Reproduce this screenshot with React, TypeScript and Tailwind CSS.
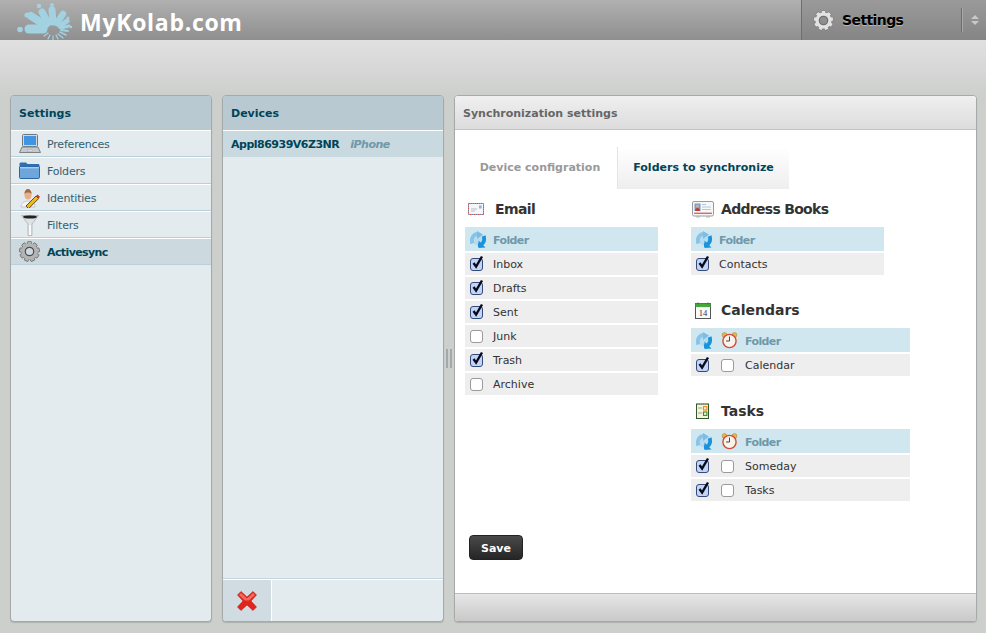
import React from 'react';

const Gear = ({ size = 20, fill = '#e2e2e2', stroke = '#6f6f6f' }: { size?: number; fill?: string; stroke?: string }) => (
  <svg width={size} height={size} viewBox="0 0 24 24" className="shrink-0">
    {[0, 40, 80, 120, 160, 200, 240, 280, 320].map((a) => (
      <rect key={a} x="9.600" y="0.600" width="4.800" height="6" rx="1" fill={fill} stroke={stroke} strokeWidth="0.700" transform={`rotate(${a} 12 12)`} />
    ))}
    <circle cx="12" cy="12" r="7" fill="none" stroke={fill} strokeWidth="4.400" />
    <circle cx="12" cy="12" r="4.800" fill="none" stroke={stroke} strokeWidth="1.400" />
  </svg>
);

// petals as round-capped strokes, in screen coordinates of the top-left corner
const Logo = () => {
  const petals = [
    [29, 29, 43, 29, 9], [31, 16, 45, 25, 8], [42, 12, 48, 23, 7], [52, 10, 53, 22, 7],
    [63, 14, 57, 23, 6.500], [67, 21, 60, 26, 5], [69, 26, 61, 28, 3], [68, 31, 61, 30, 1.800],
    [66, 35, 60, 32, 1.400], [63, 38, 58, 34, 1.200], [58, 39, 56, 35, 1.200], [53, 40, 53, 36, 1.200],
    [48, 39, 50, 35, 1.200], [44, 36, 48, 33, 1.200],
  ];
  const dots = [
    [20, 29.500, 2.800], [27, 15, 2.600], [39, 6, 2.200], [52, 5, 2], [68, 18, 1.500], [71, 27, 1.200],
  ];
  return (
    <svg width="65" height="40" viewBox="15 0 65 40" className="shrink-0">
      {petals.map(([x1, y1, x2, y2, w], i) => (
        <line key={i} x1={x1} y1={y1} x2={x2} y2={y2} stroke="#a2d2e2" strokeWidth={w} strokeLinecap="round" />
      ))}
      {dots.map(([cx, cy, r], i) => (
        <circle key={i} cx={cx} cy={cy} r={r} fill="#a2d2e2" />
      ))}
    </svg>
  );
};

const Laptop = () => (
  <svg width="22" height="20" viewBox="0 0 22 20">
    <rect x="3.500" y="0.500" width="15" height="12" rx="1" fill="#d4d8da" stroke="#70777b" />
    <rect x="5" y="2" width="12" height="9" fill="#3f94e4" />
    <path d="M3 13h16l2.500 5.500H0.500z" fill="#c6c9cb" stroke="#7d8285" />
    <rect x="8.500" y="16" width="5" height="1.600" fill="#eef0f1" stroke="#9a9fa2" strokeWidth="0.500" />
  </svg>
);

const FolderIcon = () => (
  <svg width="21" height="17" viewBox="0 0 21 17">
    <path d="M0.500 2c0-1 .5-1.500 1.500-1.500h5L8.500 2H19c1 0 1.500.5 1.500 1.500V5H.5z" fill="#2f6fb0" />
    <path d="M.5 5h20v10.500c0 .6-.4 1-1 1h-18c-.6 0-1-.4-1-1z" fill="#6ea6dc" stroke="#2c67a4" />
    <rect x="1" y="5" width="19" height="1.400" fill="#a9cdf0" />
  </svg>
);

const IdentityIcon = () => (
  <svg width="20" height="20" viewBox="0 0 20 20">
    <path d="M1 19c0-4 3-6 7-6s7 2 7 6z" fill="#f2f3f4" stroke="#b4b9bc" strokeWidth="0.700" />
    <ellipse cx="8" cy="7" rx="3.600" ry="4.600" fill="#e6b08c" />
    <path d="M4.400 6c0-3 1.600-5 3.600-5s3.600 2 3.600 5C10 4 6 4 4.400 6z" fill="#a9683c" />
    <path d="M6 18l10-10 2.600 2.600-10 10z" fill="#efb81e" stroke="#3a2c0e" strokeWidth="0.800" />
    <path d="M16 8l1.600-1.600 2.400 2.400-1.400 1.800z" fill="#d7342c" />
  </svg>
);

const FunnelIcon = () => (
  <svg width="18" height="22" viewBox="0 0 18 22">
    <path d="M.5 1.500h17L11 10v11.500H7V10z" fill="#dfe2e3" stroke="#9aa0a3" strokeWidth="0.600" />
    <ellipse cx="9" cy="3" rx="7" ry="1.600" fill="#222" />
    <path d="M8 11h2v10H8z" fill="#fafafa" />
  </svg>
);

const SyncIcon = () => (
  <svg width="16" height="17" viewBox="0 0 16 17" className="shrink-0">
    <circle cx="8" cy="8.500" r="6" fill="#b7dcf0" />
    <path d="M2.400 12.500C.6 7.500 3.500 3 8 2.800" fill="none" stroke="#86c4ea" strokeWidth="3.800" />
    <path d="M7 0l6 3.500-6 4.500z" fill="#7cbde8" />
    <path d="M13.600 5c1.800 5-1 9-5.600 9.200" fill="none" stroke="#1b93dc" strokeWidth="3.800" />
    <path d="M8.500 9.500V17l7-.5z" fill="#1b93dc" />
  </svg>
);

const ClockIcon = () => (
  <svg width="17" height="17" viewBox="0 0 17 17" className="shrink-0">
    <circle cx="3.500" cy="3" r="2.400" fill="#e9b84a" stroke="#a9762a" strokeWidth="0.500" />
    <circle cx="13.500" cy="3" r="2.400" fill="#e9b84a" stroke="#a9762a" strokeWidth="0.500" />
    <circle cx="8.500" cy="9" r="6.600" fill="#f8f4ea" stroke="#d24a3a" strokeWidth="1.400" />
    <path d="M8.500 4.500V9H5" fill="none" stroke="#333" strokeWidth="0.900" />
  </svg>
);

const CheckBox = ({ checked = false }: { checked?: boolean }) => (
  <span className={`relative block w-[13px] h-[13px] shrink-0 rounded-[3px] border ${checked ? 'border-[#31497c] bg-[#c4d4f2]' : 'border-[#9a9a9a] bg-white'}`}>
    {checked && (
      <svg width="15" height="15" viewBox="0 0 15 15" className="absolute left-0 top-[-4px]">
        <path d="M2.500 8l2.600 3.600L11 1.500" fill="none" stroke="#060b20" strokeWidth="2.400" />
      </svg>
    )}
  </span>
);

const EnvelopeIcon = () => (
  <svg width="16" height="12" viewBox="0 0 16 12">
    <rect x="0.500" y="0.500" width="15" height="11" fill="#f4f6f8" stroke="#5b82b0" strokeWidth="1" strokeDasharray="2 2" />
    <rect x="0.500" y="0.500" width="15" height="11" fill="none" stroke="#d8524a" strokeWidth="1" strokeDasharray="2 2" strokeDashoffset="2" />
    <path d="M3 6h6M3 8h4" stroke="#9aa7b2" strokeWidth="0.700" />
    <rect x="11" y="2.500" width="2.600" height="3" fill="#8db4d6" />
  </svg>
);

const CardIcon = () => (
  <svg width="22" height="17" viewBox="0 0 22 17">
    <rect x="0.500" y="0.500" width="21" height="14.500" rx="1.500" fill="#f6f7f8" stroke="#9c9c9c" />
    <rect x="2.500" y="2.500" width="6" height="7.500" fill="#6da0d4" />
    <circle cx="5.500" cy="5" r="1.600" fill="#e3a987" />
    <path d="M3 10c0-2 1-3 2.500-3S8 8 8 10z" fill="#c43a30" />
    <path d="M10 3.500h4M10 6h9M10 8.500h9" stroke="#a7bdd0" strokeWidth="0.800" />
    <rect x="2" y="11.600" width="18" height="1.400" fill="#d96a5c" />
    <path d="M4 15h4v1.500H4zM14 15h4v1.500h-4z" fill="#bdbdbd" />
  </svg>
);

const CalendarIcon = () => (
  <svg width="16" height="17" viewBox="0 0 16 17">
    <rect x="0.500" y="1.500" width="15" height="15" fill="#fafafa" stroke="#555" />
    <rect x="0.500" y="1.500" width="15" height="3.600" fill="#47a83a" />
    <path d="M3 .5v2M13 .5v2" stroke="#2c7a25" />
    <text x="8" y="14" textAnchor="middle" fontSize="8.500" fontFamily="Liberation Serif, serif" fill="#333">14</text>
  </svg>
);

const TasksIcon = () => (
  <svg width="13" height="16" viewBox="0 0 13 16">
    <rect x="0.500" y="1" width="12" height="14.500" fill="#f6f3dc" stroke="#2e5a2c" />
    <path d="M1 1.200h11" stroke="#6a9a58" strokeWidth="1.400" strokeDasharray="1 1" />
    <path d="M2 5h4M2 10h4" stroke="#8a8a6a" strokeWidth="0.800" />
    <rect x="7.500" y="3.600" width="3.400" height="3.400" fill="none" stroke="#e88a1a" strokeWidth="1.100" />
    <rect x="7.500" y="9" width="3.400" height="3.400" fill="none" stroke="#3c8a30" strokeWidth="1.100" />
  </svg>
);

const DeleteIcon = () => (
  <svg width="22" height="22" viewBox="0 0 22 22">
    <path d="M5 1.500L11 7l6-5.500 3.500 3.500L15 11l5.500 6-3.500 3.500L11 15l-6 5.500L1.500 17 7 11 1.500 5z" fill="#e3241a" stroke="#b3261c" strokeWidth="0.600" />
    <path d="M3 5l2-2 6 5.500 6-5.500 2 2-6 5.500H9z" fill="#f6695c" />
  </svg>
);

const navItems = [
  { label: 'Preferences', icon: <Laptop /> },
  { label: 'Folders', icon: <FolderIcon /> },
  { label: 'Identities', icon: <IdentityIcon /> },
  { label: 'Filters', icon: <FunnelIcon /> },
  { label: 'Activesync', icon: <Gear size={21} fill="#b4b4b4" stroke="#4d4d4d" />, active: true },
];

type Row = { name: string; sync: boolean; alarm?: boolean };

const FolderTable = ({ rows, showAlarm, width }: { rows: Row[]; showAlarm?: boolean; width: string }) => (
  <div className={`${width} flex flex-col gap-[2px]`}>
    <div className="h-[24px] bg-[#d1e7f0] flex items-center pl-[5px]">
      <span className="w-[23px]"><SyncIcon /></span>
      {showAlarm && <span className="w-[26px] pl-[2px]"><ClockIcon /></span>}
      <span className="pt-[5px] font-bold text-[#6f98a8] text-[11px] tracking-[-0.6px]">Folder</span>
    </div>
    {rows.map((r) => (
      <div key={r.name} className="h-[22px] bg-[#eeeeee] flex items-center pl-[5px]">
        <span className="w-[23px]"><CheckBox checked={r.sync} /></span>
        {showAlarm && <span className="w-[26px] pl-[2px]"><CheckBox checked={r.alarm} /></span>}
        <span className="pt-[2px] text-[11px] text-[#333333]">{r.name}</span>
      </div>
    ))}
  </div>
);

const SectionTitle = ({ icon, label, gap, labelClass = '' }: { icon: React.ReactNode; label: string; gap: string; labelClass?: string }) => (
  <div className="h-[24px] flex items-center mb-[6px]">
    <span className={`${gap} flex items-center`}>{icon}</span>
    <span className={`text-[14px] font-bold text-[#333333] ${labelClass}`}>{label}</span>
  </div>
);

const Panel = ({ className, children }: { className: string; children: React.ReactNode }) => (
  <div className={`${className} flex flex-col rounded-[4px] border border-[#a6a9a9] overflow-hidden shadow-[0_1px_1px_rgba(0,0,0,0.15)]`}>{children}</div>
);

const PanelTitle = ({ children }: { children: React.ReactNode }) => (
  <div className="h-[34px] shrink-0 bg-[#b9c9d1] flex items-center px-[8px] pt-[2px] text-[11px] font-bold text-[#004458]">{children}</div>
);

export default function App() {
  return (
    <div className="h-[633px] w-[986px] overflow-hidden flex flex-col bg-[#cdcfcd] font-['DejaVu_Sans',sans-serif]">
      <header className="h-[40px] shrink-0 flex items-stretch bg-gradient-to-b from-[#b0b0b0] to-[#8f8f8f]">
        <div className="flex-1 flex items-center pl-[15px]">
          <Logo />
          <span className="pt-[5px] text-[23px] font-bold text-white font-['Open_Sans',sans-serif] tracking-[0.7px]">MyKolab.com</span>
        </div>
        <div className="w-[185px] flex items-center border-l border-[#6e6e6e] bg-gradient-to-b from-[#9a9a9a] to-[#858585] pl-[11px]">
          <Gear size={21} />
          <span className="ml-[8px] text-[14px] font-bold text-black tracking-[-0.6px] [text-shadow:0_1px_0_rgba(255,255,255,0.4)]">Settings</span>
          <span className="ml-auto h-[24px] w-px bg-[#6e6e6e] border-r border-[#a8a8a8] box-content" />
          <span className="w-[23px] flex flex-col items-center gap-[2px]">
            <span className="w-0 h-0 border-x-[4px] border-x-transparent border-b-[4px] border-b-[#c8c8c8]" />
            <span className="w-0 h-0 border-x-[4px] border-x-transparent border-t-[4px] border-t-[#c8c8c8]" />
          </span>
        </div>
      </header>
      <div className="h-[55px] shrink-0 bg-gradient-to-b from-[#e0e0e0] to-[#cdcfcd]" />
      <div className="flex pl-[10px] h-[527px]">
        <Panel className="w-[202px] bg-[#e3ebef]">
          <PanelTitle>Settings</PanelTitle>
          {navItems.map((n) => (
            <div key={n.label} className={`h-[27px] shrink-0 flex items-center border-t border-white border-b border-b-[#b9d0db] ${n.active ? 'bg-[#ccd9df] font-bold text-[#004458] tracking-[-0.6px]' : 'text-[#34606e] tracking-[-0.2px]'}`}>
              <span className="w-[36px] pl-[1px] flex justify-center">{n.icon}</span>
              <span className="pt-[4px] text-[11px]">{n.label}</span>
            </div>
          ))}
        </Panel>
        <div className="w-[10px]" />
        <Panel className="w-[222px] bg-[#e3ebef]">
          <PanelTitle>Devices</PanelTitle>
          <div className="h-[27px] shrink-0 flex items-center px-[8px] pt-[2px] border-t border-white bg-[#c9d9e0] text-[11px] tracking-[-0.5px]">
            <span className="font-bold text-[#004458]">Appl86939V6Z3NR</span>
            <span className="ml-[11px] italic font-bold text-[#6f98a8]">iPhone</span>
          </div>
          <div className="flex-1" />
          <div className="h-[43px] shrink-0 border-t border-[#c3d6df] flex">
            <div className="flex-1 flex border-t border-white">
              <div className="w-[49px] bg-[#d0dbe2] border-r border-white flex items-center justify-center">
                <DeleteIcon />
              </div>
            </div>
          </div>
        </Panel>
        <div className="w-[10px] flex items-center justify-center">
          <span className="w-[6px] h-[19px] border-x-[2px] border-[#a3a9ab]" />
        </div>
        <Panel className="w-[523px] bg-white">
          <div className="h-[34px] shrink-0 bg-gradient-to-b from-[#f0f0f0] to-[#dcdcdc] border-b border-[#c4c4c4] flex items-center px-[8px] pt-[4px] text-[11px] font-bold text-[#666666]">
            Synchronization settings
          </div>
          <div className="flex-1 flex flex-col pl-[10px]">
            <div className="h-[59px] shrink-0 flex items-end pl-[2px]">
              <div className="w-[150px] h-[42px] flex items-center justify-center pr-[4px] text-[11px] font-bold text-[#999999]">Device configration</div>
              <div className="w-[172px] h-[42px] flex items-center justify-center border-l border-[#e4e4e4] bg-gradient-to-b from-white to-[#eeeeee] text-[11px] font-bold text-[#004458]">Folders to synchronize</div>
            </div>
            <div className="flex pt-[8px]">
              <div className="w-[226px]">
                <SectionTitle icon={<EnvelopeIcon />} label="Email" gap="w-[30px] pl-[3px]" labelClass="tracking-[-0.6px]" />
                <FolderTable
                  width="w-[193px]"
                  rows={[
                    { name: 'Inbox', sync: true },
                    { name: 'Drafts', sync: true },
                    { name: 'Sent', sync: true },
                    { name: 'Junk', sync: false },
                    { name: 'Trash', sync: true },
                    { name: 'Archive', sync: false },
                  ]}
                />
              </div>
              <div className="flex flex-col">
                <SectionTitle icon={<CardIcon />} label="Address Books" gap="w-[30px] pl-[1px]" labelClass="tracking-[-0.7px]" />
                <FolderTable width="w-[193px]" rows={[{ name: 'Contacts', sync: true }]} />
                <div className="h-[23px]" />
                <SectionTitle icon={<CalendarIcon />} label="Calendars" gap="w-[30px] pl-[4px]" />
                <FolderTable width="w-[219px]" showAlarm rows={[{ name: 'Calendar', sync: true }]} />
                <div className="h-[23px]" />
                <SectionTitle icon={<TasksIcon />} label="Tasks" gap="w-[30px] pl-[5px]" />
                <FolderTable
                  width="w-[219px]"
                  showAlarm
                  rows={[
                    { name: 'Someday', sync: true },
                    { name: 'Tasks', sync: true },
                  ]}
                />
              </div>
            </div>
            <div className="flex-1 relative">
              <button className="absolute top-[34px] left-[4px] w-[54px] h-[25px] pt-[3px] rounded-[4px] border border-[#222] bg-gradient-to-b from-[#4a4a4a] to-[#262626] text-white text-[11px] font-bold">Save</button>
            </div>
          </div>
          <div className="h-[28px] shrink-0 border-t border-[#bdbdbd] bg-gradient-to-b from-[#e6e6e6] to-[#c9c9c9]" />
        </Panel>
      </div>
    </div>
  );
}
